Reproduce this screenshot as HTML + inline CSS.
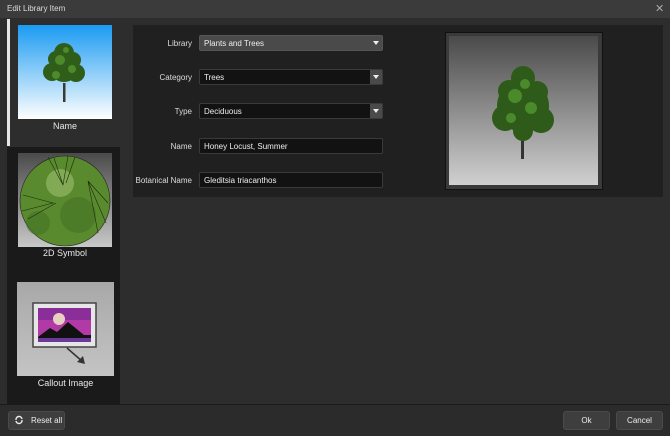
<!DOCTYPE html>
<html><head><style>
*{margin:0;padding:0;box-sizing:border-box}
body{width:670px;height:436px;background:#2d2d2d;font-family:"Liberation Sans",sans-serif;color:#e8e8e8;font-size:8px;position:relative;overflow:hidden}
.a{position:absolute}
.lbl{position:absolute;right:478px;text-align:right;font-size:8px;color:#ddd}
.fld{position:absolute;left:199px;width:184px;height:16px;background:#121212;border:1px solid #3a3a3a;border-radius:2px;padding:3px 4px;font-size:8px;color:#eee}
.dd{position:absolute;right:0;top:0;width:12px;height:14px;background:#4a4a4a}
.dd:after{content:"";position:absolute;left:3px;top:5px;border-left:3px solid transparent;border-right:3px solid transparent;border-top:4px solid #eee}
.btn{position:absolute;top:411px;height:19px;width:47px;background:#3e3e3e;border:1px solid #4a4a4a;border-radius:3px;text-align:center;font-size:8px;line-height:17px;color:#eee}
</style></head><body>
<div class="a" style="left:0;top:0;width:670px;height:18px;background:#3b3b3b"></div>
<div class="a" style="left:7px;top:4px;font-size:8px;color:#ddd">Edit Library Item</div>
<div class="a" style="left:655px;top:2px;font-size:11px;color:#aaa">✕</div>

<div class="a" style="left:7px;top:147px;width:113px;height:257px;background:#1a1a1a"></div>
<div class="a" style="left:7px;top:19px;width:3px;height:127px;background:#e6e6e6"></div>

<div class="a" style="left:18px;top:25px;width:94px;height:94px;background:linear-gradient(#1a9bf2,#ffffff)">
<svg width="94" height="94"><rect x="45" y="58" width="2.5" height="19" fill="#3a3a30"/>
<g fill="#2f5d1a"><circle cx="46" cy="42" r="15"/><circle cx="34" cy="47" r="9"/><circle cx="58" cy="48" r="9"/><circle cx="46" cy="28" r="10"/><circle cx="38" cy="34" r="8"/><circle cx="55" cy="35" r="8"/></g>
<g fill="#4e8a2a"><circle cx="42" cy="35" r="5"/><circle cx="54" cy="44" r="4"/><circle cx="38" cy="50" r="4"/><circle cx="48" cy="25" r="3"/></g></svg></div>
<div class="a" style="left:18px;top:121px;width:94px;text-align:center;font-size:9px">Name</div>

<div class="a" style="left:18px;top:153px;width:94px;height:94px;background:linear-gradient(#4a4a4a,#c8c8c8)">
<svg width="94" height="94"><circle cx="47" cy="48" r="45" fill="#5a8a2e" stroke="#222" stroke-width="0.6"/>
<circle cx="42" cy="30" r="14" fill="#9cc070" opacity=".6"/><circle cx="60" cy="62" r="18" fill="#3e6e20" opacity=".5"/><circle cx="20" cy="70" r="12" fill="#3e6e20" opacity=".5"/>
<g stroke="#1a2a10" stroke-width=".6" fill="none"><path d="M30 4L45 32L50 3M36 5L45 32M57 4L48 30M5 42L35 50L4 58M10 66L38 50M70 28L80 80M70 28L88 70M70 28L90 50"/></g></svg></div>
<div class="a" style="left:18px;top:248px;width:94px;text-align:center;font-size:9px">2D Symbol</div>

<div class="a" style="left:17px;top:282px;width:97px;height:94px;background:linear-gradient(#a8a8a8,#c4c4c4)">
<svg width="97" height="94"><rect x="16" y="21" width="63" height="44" fill="#e6e6e6" stroke="#444" stroke-width="1.5"/>
<rect x="21" y="26" width="53" height="34" fill="#b23aa6"/><rect x="21" y="26" width="53" height="12" fill="#8a2e9a"/>
<circle cx="42" cy="37" r="6" fill="#e8d0c0"/><path d="M21 55L33 46L40 50L51 40L67 53L74 53L74 56L21 56Z" fill="#111"/><rect x="21" y="56" width="53" height="4" fill="#6a3a9a"/>
<path d="M50 66L66 80" stroke="#333" stroke-width="1.5"/><path d="M68 82L60 80L66 74Z" fill="#333"/></svg></div>
<div class="a" style="left:17px;top:378px;width:97px;text-align:center;font-size:9px">Callout Image</div>

<div class="a" style="left:133px;top:25px;width:530px;height:172px;background:#202020"></div>
<div class="lbl" style="top:39px">Library</div>
<div class="fld" style="top:35px;background:#4a4a4a;border-color:#555">Plants and Trees<div class="dd" style="background:#4a4a4a"></div></div>
<div class="lbl" style="top:73px">Category</div>
<div class="fld" style="top:69px">Trees<div class="dd"></div></div>
<div class="lbl" style="top:107px">Type</div>
<div class="fld" style="top:103px">Deciduous<div class="dd"></div></div>
<div class="lbl" style="top:142px">Name</div>
<div class="fld" style="top:138px">Honey Locust, Summer</div>
<div class="lbl" style="top:176px">Botanical Name</div>
<div class="fld" style="top:172px">Gleditsia triacanthos</div>

<div class="a" style="left:445px;top:32px;width:158px;height:158px;background:#3a3a3a;border:1px solid #111"></div>
<div class="a" style="left:449px;top:36px;width:149px;height:149px;background:linear-gradient(#4a4a4a,#d0d0d0)">
<svg width="149" height="149"><rect x="72" y="95" width="3" height="28" fill="#333"/>
<g fill="#2e5a1a"><circle cx="74" cy="70" r="26"/><circle cx="56" cy="82" r="13"/><circle cx="92" cy="84" r="13"/><circle cx="74" cy="42" r="12"/><circle cx="60" cy="55" r="11"/><circle cx="88" cy="56" r="11"/><circle cx="74" cy="95" r="10"/></g>
<g fill="#4a8a2a"><circle cx="66" cy="60" r="7"/><circle cx="82" cy="72" r="6"/><circle cx="62" cy="82" r="5"/><circle cx="76" cy="48" r="5"/></g></svg></div>

<div class="a" style="left:0;top:404px;width:670px;height:1px;background:#1a1a1a"></div>
<div class="a" style="left:0;top:405px;width:670px;height:31px;background:#2b2b2b"></div>
<div class="btn" style="left:8px;width:57px;text-align:left;padding-left:22px">Reset all</div>
<svg class="a" style="left:14px;top:415px" width="10" height="10"><path d="M2 5A3 3 0 0 1 8 4M8 5A3 3 0 0 1 2 6" stroke="#eee" stroke-width="1.4" fill="none"/></svg>
<div class="btn" style="left:563px">Ok</div>
<div class="btn" style="left:616px">Cancel</div>
</body></html>
